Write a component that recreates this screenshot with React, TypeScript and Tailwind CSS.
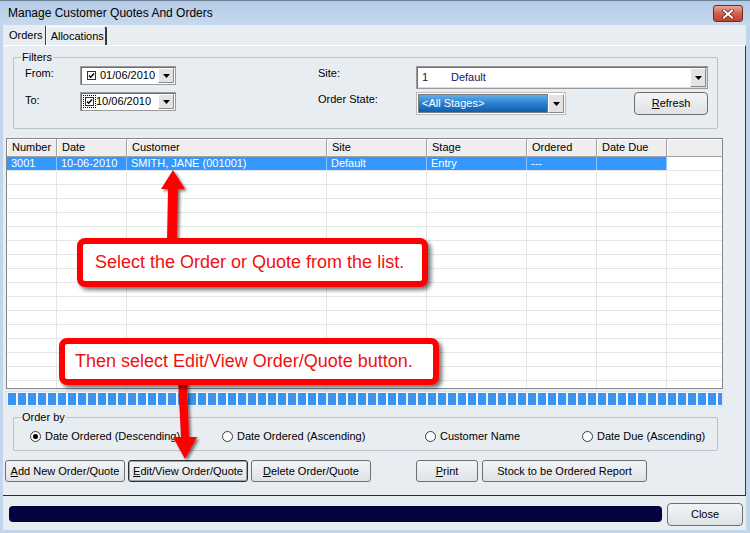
import React from 'react';

const COLS = [
  { name: 'Number', cls: 'w-[50px]' },
  { name: 'Date', cls: 'w-[70px]' },
  { name: 'Customer', cls: 'w-[200px]' },
  { name: 'Site', cls: 'w-[100px]' },
  { name: 'Stage', cls: 'w-[100px]' },
  { name: 'Ordered', cls: 'w-[70px]' },
  { name: 'Date Due', cls: 'w-[70px]' },
];

const ROWS = [['3001', '10-06-2010', 'SMITH, JANE (001001)', 'Default', 'Entry', '---', '']];

function DropButton({ cls = '' }: { cls?: string }) {
  return (
    <div className={`w-[16px] flex items-center justify-center bg-[#e3e3e3] border border-t-white border-l-white border-b-[#8a8a8a] border-r-[#8a8a8a] ${cls}`}>
      <svg width="7" height="4" viewBox="0 0 7 4">
        <path d="M0 0h7L3.5 4z" fill="#000" />
      </svg>
    </div>
  );
}

function DatePicker({ value, focused }: { value: string; focused?: boolean }) {
  return (
    <div className="w-[96px] h-[19px] flex items-center bg-white border border-[#9a9a9a] shadow-[inset_1px_1px_0_#6e6e6e] pl-[5px] pr-[1px]">
      <div className={`p-[1px] ${focused ? 'outline outline-1 outline-dotted outline-black -ml-[2px] mr-[-2px]' : ''}`}>
        <div className="w-[9px] h-[9px] border border-[#333] bg-white flex items-center justify-center">
          <svg width="7" height="7" viewBox="0 0 7 7">
            <path d="M1 3.5l1.6 1.7L6 1.5" stroke="#000" strokeWidth="1.3" fill="none" />
          </svg>
        </div>
      </div>
      <span className="ml-[3px] flex-1 leading-[13px]">{value}</span>
      <DropButton cls="h-[15px]" />
    </div>
  );
}

function Button({ label, u, cls, focus }: { label: string; u?: number; cls: string; focus?: boolean }) {
  const text = u === undefined ? label : (
    <>
      {label.slice(0, u)}
      <span className="underline">{label[u]}</span>
      {label.slice(u + 1)}
    </>
  );
  return (
    <button
      className={`h-[22px] rounded-[3px] border bg-gradient-to-b from-[#f3f4f6] to-[#dfe2e6] text-[11px] text-black flex items-center justify-center ${
        focus ? 'border-[#2f2f2f] shadow-[inset_0_0_0_1px_#9aa3ad]' : 'border-[#6f6f6f]'
      } ${cls}`}
    >
      {text}
    </button>
  );
}

function Radio({ label, checked, cls }: { label: string; checked?: boolean; cls?: string }) {
  return (
    <div className={`flex items-center ${cls ?? ''}`}>
      <div className="w-[11px] h-[11px] rounded-full border border-[#3a3a3a] bg-white flex items-center justify-center">
        {checked && <div className="w-[5px] h-[5px] rounded-full bg-black" />}
      </div>
      <span className="ml-[4px] leading-[13px]">{label}</span>
    </div>
  );
}

export default function App() {
  const segments = Array.from({ length: 72 });
  const emptyRows = Array.from({ length: 16 });

  return (
    <div className="w-[750px] h-[533px] relative overflow-hidden flex flex-col bg-[#c1d5ec] font-['Liberation_Sans',Arial,sans-serif] text-[11px] text-black">
      {/* Title bar */}
      <div className="h-[25px] flex justify-between border-t border-[#6d7f95] bg-gradient-to-b from-[#b4cae5] to-[#c6d9ee] pl-[8px] pr-[7px]">
        <span className="text-[12px] leading-[24px]">Manage Customer Quotes And Orders</span>
        <div className="mt-[4px] w-[30px] h-[17px] rounded-[3px] border border-[#6e2c22] bg-gradient-to-b from-[#e9a598] via-[#d0604e] to-[#c0402c] flex items-center justify-center">
          <svg width="12" height="10" viewBox="0 0 12 10">
            <path d="M2 1.5l8 7M10 1.5l-8 7" stroke="#5a2018" strokeWidth="3.4" strokeLinecap="square" />
            <path d="M2 1.5l8 7M10 1.5l-8 7" stroke="#fff" strokeWidth="2" strokeLinecap="square" />
          </svg>
        </div>
      </div>

      {/* Client area */}
      <div className="flex-1 flex flex-col ml-[3px] mr-[4px] mb-[3px] bg-[#e8edf2]">
        {/* Tabs */}
        <div className="h-[20px] flex items-end pl-[3px]">
          <div className="h-[19px] pl-[3px] pr-[2px] flex items-center border-r border-[#3a3a3a]">Orders</div>
          <div className="h-[19px] pl-[4px] pr-[1px] flex items-center border-l border-t border-white border-r-2 border-r-[#3a3a3a] rounded-tr-[3px]">Allocations</div>
        </div>

        {/* Tab page */}
        <div className="h-[451px] flex flex-col border-t border-white border-r border-b border-r-[#3a3a3a] border-b-[#2a2a2a]">
          {/* Filters */}
          <div className="relative mt-[11px] ml-[10px] w-[705px] h-[72px] border border-[#bcc3cb] rounded-[2px] flex flex-col pt-[8px] pl-[11px]">
            <span className="absolute -top-[7px] left-[7px] px-[1px] leading-[13px] bg-[#e8edf2]">Filters</span>
            <div className="flex h-[23px]">
              <span className="w-[55px] pt-[1px] leading-[13px]">From:</span>
              <DatePicker value="01/06/2010" />
              <span className="ml-[142px] w-[98px] pt-[1px] leading-[13px]">Site:</span>
              <div className="w-[292px] h-[23px] flex items-center bg-white border border-[#9a9a9a] shadow-[inset_1px_1px_0_#6e6e6e,inset_-1px_-1px_0_#dcdcdc] pl-[5px] pr-[1px] text-[#14146a]">
                <span className="w-[29px]">1</span>
                <span className="flex-1">Default</span>
                <DropButton cls="h-[19px]" />
              </div>
            </div>
            <div className="flex h-[23px] mt-[3px]">
              <span className="w-[55px] pt-[2px] leading-[13px]">To:</span>
              <DatePicker value="10/06/2010" focused />
              <span className="ml-[142px] w-[98px] pt-[1px] leading-[13px]">Order State:</span>
              <div className="w-[150px] h-[23px] flex items-stretch bg-white border border-[#bdbdbd] p-[1px]">
                <div className="flex-1 flex items-center pl-[3px] text-white bg-gradient-to-b from-[#62ade9] via-[#2a7fcf] to-[#0f5dac] border border-[#7a7a7a]">&lt;All Stages&gt;</div>
                <DropButton />
              </div>
              <Button label="Refresh" u={0} cls="ml-[68px] w-[74px] h-[23px] rounded-[4px]" />
            </div>
          </div>

          {/* Grid */}
          <div className="mt-[9px] ml-[3px] w-[717px] h-[251px] border border-[#828790] bg-white flex flex-col overflow-hidden">
            <div className="h-[18px] flex shrink-0 bg-[#eeeeee]">
              {COLS.map((c) => (
                <div key={c.name} className={`${c.cls} px-[5px] flex items-center border-r border-b border-[#a2a2a2] shadow-[inset_1px_1px_0_#fff]`}>
                  {c.name}
                </div>
              ))}
              <div className="flex-1 border-b border-[#a2a2a2] shadow-[inset_1px_1px_0_#fff]" />
            </div>
            {ROWS.map((r, i) => (
              <div key={i} className="h-[14px] flex shrink-0 border-b border-[#e5e5e5]">
                {COLS.map((c, j) => (
                  <div key={c.name} className={`${c.cls} px-[4px] leading-[13px] whitespace-nowrap bg-[#3399ff] text-white border-r border-[#8ec5ff]`}>
                    {r[j]}
                  </div>
                ))}
                <div className="flex-1" />
              </div>
            ))}
            {emptyRows.map((_, i) => (
              <div key={i} className="h-[14px] flex shrink-0 border-b border-[#e5e5e5]">
                {COLS.map((c) => (
                  <div key={c.name} className={`${c.cls} border-r border-[#e5e5e5]`} />
                ))}
                <div className="flex-1" />
              </div>
            ))}
          </div>

          {/* Segmented bar */}
          <div className="mt-[2px] ml-[3px] w-[717px] h-[16px] border border-[#dde2e8] bg-[#f4f6f8] p-[1px] flex gap-[2px] overflow-hidden">
            {segments.map((_, i) => (
              <div key={i} className="w-[8px] h-full shrink-0 bg-[#3a94f3]" />
            ))}
          </div>

          {/* Order by */}
          <div className="relative mt-[10px] ml-[10px] w-[705px] h-[34px] border border-[#bcc3cb] rounded-[2px] flex items-center pl-[16px] pt-[4px]">
            <span className="absolute -top-[7px] left-[7px] px-[1px] leading-[13px] bg-[#e8edf2]">Order by</span>
            <Radio label="Date Ordered (Descending)" checked cls="w-[192px]" />
            <Radio label="Date Ordered (Ascending)" cls="w-[203px]" />
            <Radio label="Customer Name" cls="w-[157px]" />
            <Radio label="Date Due (Ascending)" />
          </div>

          {/* Buttons */}
          <div className="mt-[9px] ml-[2px] flex">
            <Button label="Add New Order/Quote" u={0} cls="w-[120px]" />
            <Button label="Edit/View Order/Quote" u={0} cls="ml-[3px] w-[120px]" focus />
            <Button label="Delete Order/Quote" u={0} cls="ml-[3px] w-[120px]" />
            <Button label="Print" u={0} cls="ml-[45px] w-[62px]" />
            <Button label="Stock to be Ordered Report" cls="ml-[4px] w-[165px]" />
          </div>
        </div>

        {/* Bottom */}
        <div className="flex-1 flex items-start">
          <div className="mt-[10px] ml-[6px] w-[653px] h-[16px] rounded-[4px] bg-[#04043c]" />
          <Button label="Close" cls="mt-[7px] ml-[5px] w-[76px] h-[23px] rounded-[4px]" />
        </div>
      </div>

      {/* Callout arrows */}
      <svg className="absolute inset-0 pointer-events-none" width="750" height="533" viewBox="0 0 750 533">
        <defs>
          <filter id="sh" x="-50%" y="-50%" width="200%" height="200%">
            <feDropShadow dx="2" dy="2" stdDeviation="1.5" floodColor="#000" floodOpacity="0.55" />
          </filter>
        </defs>
        <polygon points="173,170 185,189 178,189 177,242 167,242 168,189 161,189" fill="#ff0000" filter="url(#sh)" />
        <polygon points="178,380 187,380 189,437 197,437 185,459 173,437 181,437" fill="#ff0000" filter="url(#sh)" />
      </svg>

      {/* Callout boxes */}
      <div className="absolute left-[77px] top-[238px] w-[351px] h-[49px] rounded-[8px] border-[6px] border-[#ff0000] bg-white shadow-[3px_3px_4px_rgba(0,0,0,0.55)] flex items-center pl-[12px] text-[18px] text-[#f01010]">
        Select the Order or Quote from the list.
      </div>
      <div className="absolute left-[59px] top-[338px] w-[380px] h-[47px] rounded-[8px] border-[6px] border-[#ff0000] bg-white shadow-[3px_3px_4px_rgba(0,0,0,0.55)] flex items-center pl-[10px] text-[18px] text-[#f01010]">
        Then select Edit/View Order/Quote button.
      </div>
    </div>
  );
}
